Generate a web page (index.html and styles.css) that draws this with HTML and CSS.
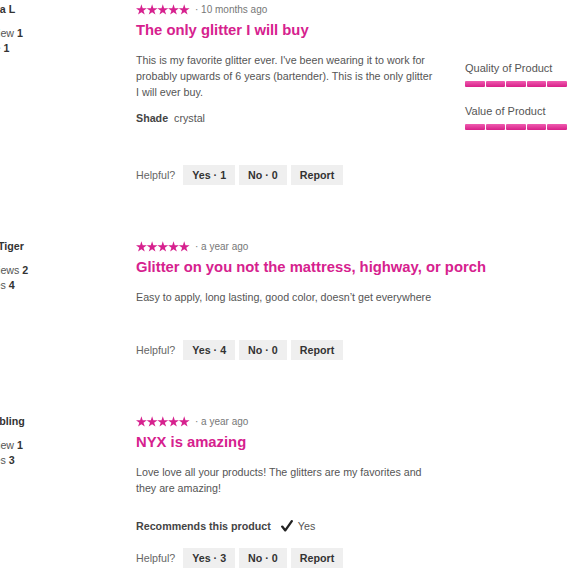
FILE: index.html
```html
<!DOCTYPE html>
<html lang="en">
<head>
<meta charset="utf-8">
<title>Reviews</title>
<link rel="stylesheet" href="styles.css">
</head>
<body>
<svg class="defs" width="0" height="0" aria-hidden="true">
  <defs>
    <polygon id="star" points="5.4,0.3 6.68,4.24 10.82,4.24 7.47,6.67 8.75,10.61 5.4,8.18 2.05,10.61 3.33,6.67 -0.02,4.24 4.12,4.24"/>
  </defs>
</svg>
<main class="page">

  <article class="review">
    <aside class="author">
      <div class="author-name">Anna L</div>
      <div class="author-stat">Review <b>1</b></div>
      <div class="author-stat">Vote <b>1</b></div>
    </aside>
    <div class="review-main">
      <div class="review-head">
        <svg class="stars" viewBox="0 0 54 11" width="54" height="11"><use href="#star" x="0"/><use href="#star" x="10.7"/><use href="#star" x="21.4"/><use href="#star" x="32.1"/><use href="#star" x="42.8"/></svg>
        <span class="review-date">· 10 months ago</span>
      </div>
      <h2 class="review-title">The only glitter I will buy</h2>
      <div class="review-body">
        <div class="review-content">
          <p class="review-text">This is my favorite glitter ever. I've been wearing it to work for probably upwards of 6 years (bartender). This is the only glitter I will ever buy.</p>
          <p class="review-attr"><b>Shade</b>crystal</p>
        </div>
        <div class="review-ratings">
          <div class="rating-label">Quality of Product</div>
          <div class="rating-bar"><span></span><span></span><span></span><span></span><span></span></div>
          <div class="rating-label">Value of Product</div>
          <div class="rating-bar"><span></span><span></span><span></span><span></span><span></span></div>
        </div>
      </div>
      <div class="helpful">
        <span class="helpful-label">Helpful?</span>
        <button class="vote-btn">Yes · 1</button>
        <button class="vote-btn">No · 0</button>
        <button class="vote-btn">Report</button>
      </div>
    </div>
  </article>

  <article class="review">
    <aside class="author">
      <div class="author-name">EyeTiger</div>
      <div class="author-stat">Reviews <b>2</b></div>
      <div class="author-stat">Votes <b>4</b></div>
    </aside>
    <div class="review-main">
      <div class="review-head">
        <svg class="stars" viewBox="0 0 54 11" width="54" height="11"><use href="#star" x="0"/><use href="#star" x="10.7"/><use href="#star" x="21.4"/><use href="#star" x="32.1"/><use href="#star" x="42.8"/></svg>
        <span class="review-date">· a year ago</span>
      </div>
      <h2 class="review-title">Glitter on you not the mattress, highway, or porch</h2>
      <div class="review-body">
        <div class="review-content">
          <p class="review-text">Easy to apply, long lasting, good color, doesn’t get everywhere</p>
        </div>
      </div>
      <div class="helpful">
        <span class="helpful-label">Helpful?</span>
        <button class="vote-btn">Yes · 4</button>
        <button class="vote-btn">No · 0</button>
        <button class="vote-btn">Report</button>
      </div>
    </div>
  </article>

  <article class="review">
    <aside class="author">
      <div class="author-name">Sunbling</div>
      <div class="author-stat">Review <b>1</b></div>
      <div class="author-stat">Votes <b>3</b></div>
    </aside>
    <div class="review-main">
      <div class="review-head">
        <svg class="stars" viewBox="0 0 54 11" width="54" height="11"><use href="#star" x="0"/><use href="#star" x="10.7"/><use href="#star" x="21.4"/><use href="#star" x="32.1"/><use href="#star" x="42.8"/></svg>
        <span class="review-date">· a year ago</span>
      </div>
      <h2 class="review-title">NYX is amazing</h2>
      <div class="review-body">
        <div class="review-content">
          <p class="review-text">Love love all your products! The glitters are my favorites and they are amazing!</p>
          <p class="recommend"><b>Recommends this product</b><svg class="check" viewBox="0 0 12 12" width="12" height="12"><path d="M1.2 6.6 L4.3 10.4 L10.8 1.2"/></svg><span>Yes</span></p>
        </div>
      </div>
      <div class="helpful helpful-tight">
        <span class="helpful-label">Helpful?</span>
        <button class="vote-btn">Yes · 3</button>
        <button class="vote-btn">No · 0</button>
        <button class="vote-btn">Report</button>
      </div>
    </div>
  </article>

</main>
</body>
</html>
```

FILE: styles.css
```css
* { box-sizing: border-box; }

html, body {
  margin: 0;
  padding: 0;
  background: #ffffff;
  overflow: hidden;
}

body {
  font-family: "Liberation Sans", Arial, Helvetica, sans-serif;
  color: #555555;
  font-size: 10.7px;
}

.defs {
  position: absolute;
  width: 0;
  height: 0;
}

.page {
  margin-left: -21px;
  width: 601px;
}

.review {
  display: grid;
  grid-template-columns: 157px 1fr;
  padding-top: 1px;
  margin-bottom: 52px;
}

.author {
  color: #555555;
}

.author-name {
  font-weight: bold;
  color: #333333;
  line-height: 16px;
  margin-bottom: 9px;
}

.author-stat {
  line-height: 15px;
}

.author-stat b {
  color: #333333;
}

.review-main {
  display: flex;
  flex-direction: column;
}

.review-head {
  display: flex;
  align-items: center;
  height: 16px;
}

.stars {
  fill: #d6218e;
  display: block;
  margin-right: 5px;
}

.review-date {
  font-size: 10px;
  color: #777777;
}

.review-title {
  margin: 3px 0 0;
  font-size: 14.8px;
  line-height: 20px;
  font-weight: bold;
  color: #d6218e;
}

.review-body {
  display: flex;
  gap: 28px;
  margin-top: 12px;
}

.review-content {
  width: 301px;
}

.review-text {
  margin: 0;
  line-height: 16px;
}

.review-attr {
  margin: 10px 0 0;
  line-height: 16px;
}

.review-attr b {
  color: #444444;
  margin-right: 6px;
}

.recommend {
  margin: 22px 0 0;
  line-height: 16px;
  display: flex;
  align-items: center;
}

.recommend b {
  color: #444444;
}

.check {
  margin: 0 5px 0 10px;
  fill: none;
  stroke: #222222;
  stroke-width: 2.3;
  stroke-linecap: round;
  stroke-linejoin: round;
}

.review-ratings {
  width: 102px;
  padding-top: 8px;
}

.rating-label {
  font-size: 11px;
  line-height: 16px;
  color: #555555;
}

.rating-bar {
  display: flex;
  gap: 1px;
  margin: 5px 0 16px;
  height: 6px;
}

.rating-bar:last-child {
  margin-bottom: 0;
}

.rating-bar span {
  flex: 1;
  border-radius: 1px;
  background: linear-gradient(#ef5cb0, #d81f88);
}

.helpful {
  display: flex;
  align-items: center;
  margin-top: 35px;
  gap: 4px;
}

.helpful-tight {
  margin-top: 14px;
}

.helpful-label {
  margin-right: 4px;
  color: #666666;
}

.vote-btn {
  font-family: inherit;
  font-size: 10.7px;
  font-weight: bold;
  color: #333333;
  background: #efefef;
  border: 0;
  border-radius: 0;
  height: 20px;
  padding: 0 9px;
  margin: 0;
}
```
